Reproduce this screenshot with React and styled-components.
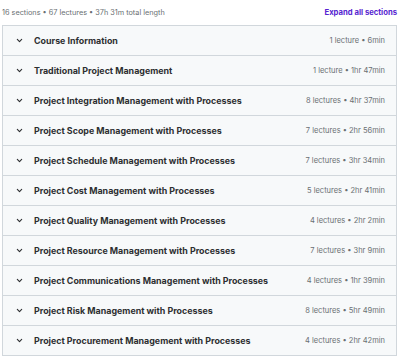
import styled, { createGlobalStyle } from "styled-components";

const Global = createGlobalStyle`
    body{
        margin: 0;
        background: #fff;
        font-family: "Inter", "Liberation Sans", sans-serif;
        color: #2d2f31;
    }
`

const Wrap = styled.div`
    padding: 0 3px 0 2px;
`

const TopBar = styled.div`
    display: flex;
    align-items: center;
    justify-content: space-between;
    height: 25px;
    padding-bottom: 1px;
    box-sizing: border-box;
`

const Summary = styled.span`
    font-size: 7.3px;
    color: #6a6f73;
`

const Expand = styled.span`
    font-size: 7.7px;
    font-weight: 700;
    color: #5624d0;
`

const Panel = styled.div`
    border: 1px solid #d1d7dc;
    border-bottom: none;
`

const Row = styled.div`
    display: flex;
    align-items: center;
    height: 29px;
    background: #f7f9fa;
    border-bottom: 1px solid #d1d7dc;
    padding: 0 11px 0 13px;
`

const Chevron = styled.svg`
    width: 7px;
    height: 7px;
    margin-right: 11px;
    flex-shrink: 0;
`

const Title = styled.span`
    flex: 1;
    font-size: 8.9px;
    font-weight: 700;
    color: #2d2f31;
    white-space: nowrap;
`

const Meta = styled.span`
    font-size: 7.5px;
    color: #6a6f73;
    white-space: nowrap;
`

const sections = [
    ["Course Information", "1 lecture • 6min"],
    ["Traditional Project Management", "1 lecture • 1hr 47min"],
    ["Project Integration Management with Processes", "8 lectures • 4hr 37min"],
    ["Project Scope Management with Processes", "7 lectures • 2hr 56min"],
    ["Project Schedule Management with Processes", "7 lectures • 3hr 34min"],
    ["Project Cost Management with Processes", "5 lectures • 2hr 41min"],
    ["Project Quality Management with Processes", "4 lectures • 2hr 2min"],
    ["Project Resource Management with Processes", "7 lectures • 3hr 9min"],
    ["Project Communications Management with Processes", "4 lectures • 1hr 39min"],
    ["Project Risk Management with Processes", "8 lectures • 5hr 49min"],
    ["Project Procurement Management with Processes", "4 lectures • 2hr 42min"],
]

export default function App(){
    return <Wrap>
        <Global />
        <TopBar>
            <Summary>16 sections • 67 lectures • 37h 31m total length</Summary>
            <Expand>Expand all sections</Expand>
        </TopBar>
        <Panel>
            {sections.map(([t, m]) => (
                <Row key={t}>
                    <Chevron viewBox="0 0 8 8">
                        <path d="M1.5 2.8 L4 5.3 L6.5 2.8" fill="none" stroke="#2d2f31" strokeWidth="1.3" strokeLinecap="round" strokeLinejoin="round"/>
                    </Chevron>
                    <Title>{t}</Title>
                    <Meta>{m}</Meta>
                </Row>
            ))}
        </Panel>
    </Wrap>
}
